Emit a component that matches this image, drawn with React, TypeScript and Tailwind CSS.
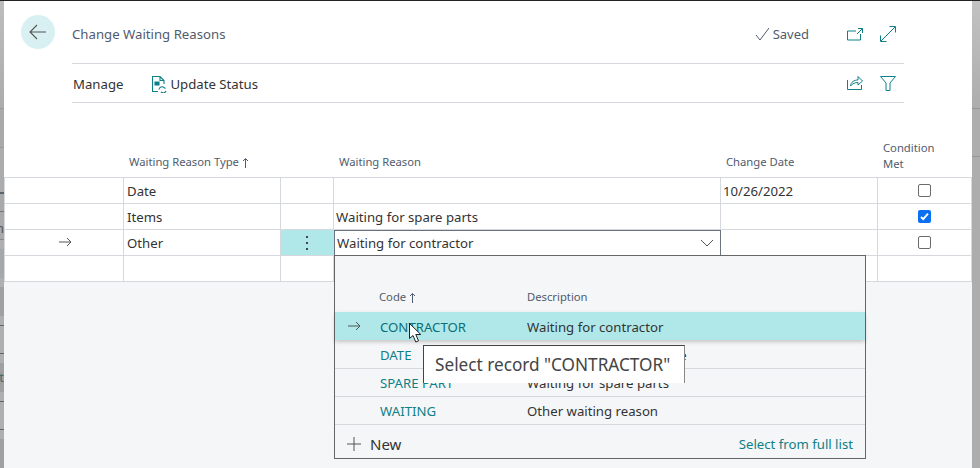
const FONT = "font-['Noto_Sans','Open_Sans',sans-serif]";

const COLS = ['w-[120px]', 'w-[157px]', 'w-[53px]', 'w-[387px]', 'w-[157px]', 'w-[94px]'];

function Cell({ width, children, className = '' }: { width: string; children?: React.ReactNode; className?: string }) {
  return (
    <div className={`${width} flex h-full shrink-0 items-center border-r border-[#d5d8dc] pt-[2px] ${className}`}>
      {children}
    </div>
  );
}

function Check({ on }: { on?: boolean }) {
  return (
    <div className="mb-[3px] flex w-full justify-center">
      {on ? (
        <div className="flex h-[13px] w-[13px] items-center justify-center rounded-[2px] bg-[#0a6ff0]">
          <svg width="9" height="9" viewBox="0 0 9 9" fill="none" stroke="#fff" strokeWidth="1.8">
            <path d="M1 5l2.2 2.2L8 1.6" />
          </svg>
        </div>
      ) : (
        <div className="h-[13px] w-[13px] rounded-[2px] border border-[#6b6b6b] bg-white" />
      )}
    </div>
  );
}

function Row({
  cells,
  marker,
  actions,
  check,
}: {
  cells: [string, string, string];
  marker?: boolean;
  actions?: boolean;
  check?: 'on' | 'off';
}) {
  return (
    <div className="flex h-[26px] border-b border-[#d5d8dc] text-[13.2px] text-[#333]">
      <Cell width={COLS[0]} className="border-l">
        {marker && (
          <div className="mb-[3px] flex w-full justify-end pr-[51px]">
            <Arrow />
          </div>
        )}
      </Cell>
      <Cell width={COLS[1]} className="pl-[3px]">{cells[0]}</Cell>
      <Cell width={COLS[2]} className={actions ? 'justify-center bg-[#b0e8ea]' : ''}>
        {actions && (
          <span className="mb-[2px] flex flex-col gap-[4px]">
            <i className="h-[2px] w-[2px] bg-[#444]" />
            <i className="h-[2px] w-[2px] bg-[#444]" />
            <i className="h-[2px] w-[2px] bg-[#444]" />
          </span>
        )}
      </Cell>
      <Cell width={COLS[3]} className="pl-[2px]">{cells[1]}</Cell>
      <Cell width={COLS[4]} className="pl-[2px]">{cells[2]}</Cell>
      <Cell width={COLS[5]}>{check && <Check on={check === 'on'} />}</Cell>
    </div>
  );
}

function Arrow() {
  return (
    <svg width="13" height="10" viewBox="0 0 13 10" fill="none" stroke="#555" strokeWidth="1">
      <path d="M0 5h12M8 1l4 4-4 4" />
    </svg>
  );
}

function UpArrow() {
  return (
    <svg width="7" height="10" viewBox="0 0 7 10" fill="none" stroke="#505c6d" strokeWidth="1">
      <path d="M3.5 10V1M1 3l2.5-2.5L6 3" />
    </svg>
  );
}

function PopupRow({ code, text, active, height }: { code: string; text: string; active?: boolean; height: string }) {
  return (
    <div
      className={`flex ${height} shrink-0 items-center pt-[3px] text-[13.2px] ${
        active
          ? 'relative bg-[#b0e8ea] shadow-[0_2px_4px_rgba(0,0,0,0.2)]'
          : 'border-b border-[#d5d8dc] last:border-b-0'
      }`}
    >
      <div className="mb-[3px] flex w-[45px] justify-end pr-[19px]">{active && <Arrow />}</div>
      <div className={`w-[147px] ${active ? 'text-[#0b6f76]' : 'text-[#0e8087]'}`}>{code}</div>
      <div className="text-[#333]">{text}</div>
    </div>
  );
}

function LeftStrip() {
  return (
    <div className="relative flex w-[4px] shrink-0 flex-col overflow-hidden bg-[#a9a9a9]">
      <div className="h-[107px] bg-linear-to-b from-[#bdbdbd] to-[#acacac]" />
      <div className="h-[1px] bg-[#999]" />
      <div className="h-[38px]" />
      <div className="h-[1px] bg-[#999]" />
      <div className="h-[44px] bg-[#acacac]" />
      <div className="h-[2px] bg-[#5a626a]" />
      <div className="h-[17px]" />
      <div className="h-[1px] bg-[#777]" />
      <div className="h-[27px]" />
      <div className="h-[1px] bg-[#888]" />
      <div className="h-[9px] bg-[#afafaf]" />
      <div className="h-[29px] bg-[#a4a8aa]" />
      <div className="h-[9px] bg-[#afafaf]" />
      <div className="h-[29px] bg-[#a0a0a0]" />
      <div className="h-[9px] bg-[#afafaf]" />
      <div className="h-[1px] bg-[#666]" />
      <div className="h-[27px] bg-[#afafaf]" />
      <div className="h-[1px] bg-[#666]" />
      <div className="h-[9px] bg-[#afafaf]" />
      <div className="h-[29px] bg-[#a0a0a0]" />
      <div className="h-[9px] bg-[#afafaf]" />
      <div className="h-[1px] bg-[#666]" />
      <div className="h-[27px] bg-[#afafaf]" />
      <div className="h-[1px] bg-[#666]" />
      <div className="h-[9px] bg-[#afafaf]" />
      <div className="flex-1 bg-[#a0a0a0]" />
      <span className="absolute right-0 top-[219px] text-[13px] leading-[16px] text-[#555]">n</span>
      <span className="absolute right-0 top-[368px] text-[13px] leading-[16px] text-[#3d6f73]">t</span>
    </div>
  );
}

function RightStrip() {
  return (
    <div className="flex w-[8px] shrink-0 flex-col bg-[#adadad]">
      <div className="h-[107px] bg-linear-to-b from-[#c2c2c2] to-[#adadad]" />
      <div className="h-[1px] bg-[#979797]" />
      <div className="h-[47px]" />
      <div className="h-[1px] bg-[#979797]" />
    </div>
  );
}

export default function App() {
  return (
    <div className={`${FONT} flex h-[468px] w-[980px] flex-col overflow-hidden bg-[#f5f6f8]`}>
      <div className="h-[1px] shrink-0 bg-[#222]" />
      <div className="flex min-h-0 flex-1">
        <LeftStrip />
        <div className="relative flex min-w-0 flex-1 flex-col">
          <div className="h-[281px] bg-white">
            <div className="flex items-start pl-[17px] pr-[68px]">
              <div className="mt-[14px] flex h-[34px] w-[34px] shrink-0 items-center justify-center rounded-full bg-[#d9f0f2]">
                <svg width="18" height="16" viewBox="0 0 18 16" fill="none" stroke="#555" strokeWidth="1.1">
                  <path d="M17 8H1M8 1L1 8l7 7" />
                </svg>
              </div>
              <div className="ml-[17px] min-w-0 flex-1">
                <div className="flex h-[63px] items-center border-b border-[#d5d8dc] pt-[4px]">
                  <span className="flex-1 pt-[2px] text-[13.2px] text-[#505c6d]">Change Waiting Reasons</span>
                  <svg width="16" height="14" viewBox="0 0 16 14" fill="none" stroke="#505c6d" strokeWidth="1">
                    <path d="M1 8l4 5 9-12" />
                  </svg>
                  <span className="ml-[2px] pt-[2px] text-[13px] text-[#505c6d]">Saved</span>
                  <svg className="ml-[38px]" width="16" height="13" viewBox="0 0 16 13" fill="none" stroke="#0e8087" strokeWidth="1">
                    <path d="M9 3H.5v9h13V6M11 .5h4.500V5M15.500.5L10 6" />
                  </svg>
                  <svg className="ml-[17px] mr-[8px]" width="16" height="16" viewBox="0 0 16 16" fill="none" stroke="#0e8087" strokeWidth="1">
                    <path d="M1 15L15 1M9.500.5h6v6M.5 9.500v6h6" />
                  </svg>
                </div>
                <div className="flex h-[39px] items-center border-b border-[#d5d8dc] pl-[1px] text-[13.2px] text-[#333]">
                  <span className="pt-[4px]">Manage</span>
                  <svg className="ml-[29px] mt-[2px]" width="15" height="17" viewBox="0 0 15 17" fill="none" stroke="#0e8087" strokeWidth="1.1">
                    <path d="M6 15.500H.5V.5H8L12 4.500V8M8 .5v4h4M7 13.500a3 3 0 0 1 5-2l1.500 1M14 15a3 3 0 0 1-5 1" />
                    <path d="M3 6h4v3H3z" fill="#0e8087" />
                  </svg>
                  <span className="ml-[3px] flex-1 pt-[4px]">Update Status</span>
                  <svg className="mb-[2px]" width="16" height="15" viewBox="0 0 16 15" fill="none" stroke="#0e8087" strokeWidth="1">
                    <path d="M.5 5v9.500h14V10M3.500 11c.5-4 3.500-6 7.500-6V1.500L15.500 6 11 10V7.500c-3 0-5.500 1-7.500 3.500z" />
                  </svg>
                  <svg className="ml-[17px] mr-[8px]" width="16" height="15" viewBox="0 0 16 15" fill="none" stroke="#0e8087" strokeWidth="1">
                    <path d="M.5.5h15L10 7v7.500H6V7z" />
                  </svg>
                </div>
              </div>
            </div>
            <div className="mt-[27px] flex h-[48px] border-b border-[#d5d8dc] text-[11.25px] text-[#505c6d]">
              <div className={`${COLS[0]} shrink-0`} />
              <div className={`${COLS[1]} flex shrink-0 items-center gap-[3px] pl-[5px] pt-[18px]`}>
                Waiting Reason Type <UpArrow />
              </div>
              <div className={`${COLS[2]} shrink-0`} />
              <div className={`${COLS[3]} flex shrink-0 items-center pl-[5px] pt-[18px]`}>Waiting Reason</div>
              <div className={`${COLS[4]} flex shrink-0 items-center pl-[5px] pt-[18px]`}>Change Date</div>
              <div className={`${COLS[5]} shrink-0 pl-[5px] pt-[10px] leading-[16px]`}>
                Condition
                <br />
                Met
              </div>
            </div>
            <Row cells={['Date', '', '10/26/2022']} check="off" />
            <Row cells={['Items', 'Waiting for spare parts', '']} check="on" />
            <Row cells={['Other', '', '']} marker actions check="off" />
            <Row cells={['', '', '']} />
          </div>

          {/* lookup field and its dropdown lie over the grid */}
          <div className="absolute left-[330px] top-[229px] flex h-[26px] w-[387px] items-center justify-between border border-[#6b7280] bg-white pl-[2px] pr-[3px] pt-[2px] text-[13.2px] text-[#333]">
            Waiting for contractor
            <svg className="mb-[2px] mr-[3px]" width="14" height="8" viewBox="0 0 14 8" fill="none" stroke="#555" strokeWidth="1">
              <path d="M1 1l6 6 6-6" />
            </svg>
          </div>
          <div className="absolute left-[330px] top-[254px] flex h-[204px] w-[532px] flex-col border border-[#666] bg-[#f5f6f8]">
            <div className="flex h-[56px] shrink-0 items-end pb-[6px] text-[11.25px] text-[#505c6d]">
              <div className="flex w-[192px] items-center gap-[3px] pl-[44px]">
                Code <UpArrow />
              </div>
              <div>Description</div>
            </div>
            <PopupRow height="h-[28px]" code="CONTRACTOR" text="Waiting for contractor" active />
            <PopupRow height="h-[29px]" code="DATE" text="Waiting for a change date" />
            <PopupRow height="h-[28px]" code="SPARE PART" text="Waiting for spare parts" />
            <PopupRow height="h-[28px]" code="WAITING" text="Other waiting reason" />
            <div className="mt-[8px] flex items-center justify-between px-[12px]">
              <div className="flex items-center gap-[9px] text-[15px] text-[#333]">
                <svg width="14" height="14" viewBox="0 0 14 14" fill="none" stroke="#555" strokeWidth="1">
                  <path d="M7 0v14M0 7h14" />
                </svg>
                New
              </div>
              <span className="pt-[2px] text-[13.2px] text-[#0e8087]">Select from full list</span>
            </div>
          </div>

          {/* hover tooltip and pointer */}
          <div className="absolute left-[419px] top-[344px] flex h-[38px] w-[262px] items-center border-x border-t border-l-[#444] border-r-[#888] border-t-[#444] bg-white pl-[11px] text-[17.2px] text-[#444]">
            Select record "CONTRACTOR"
          </div>
          <svg className="absolute left-[405px] top-[322px]" width="14" height="21" viewBox="0 0 14 21">
            <path d="M.5.5v15l3.500-3 2.800 6.500 2.700-1.200-2.700-6.300h5z" fill="#fff" stroke="#222" strokeWidth="1" />
          </svg>
        </div>
        <RightStrip />
      </div>
    </div>
  );
}
